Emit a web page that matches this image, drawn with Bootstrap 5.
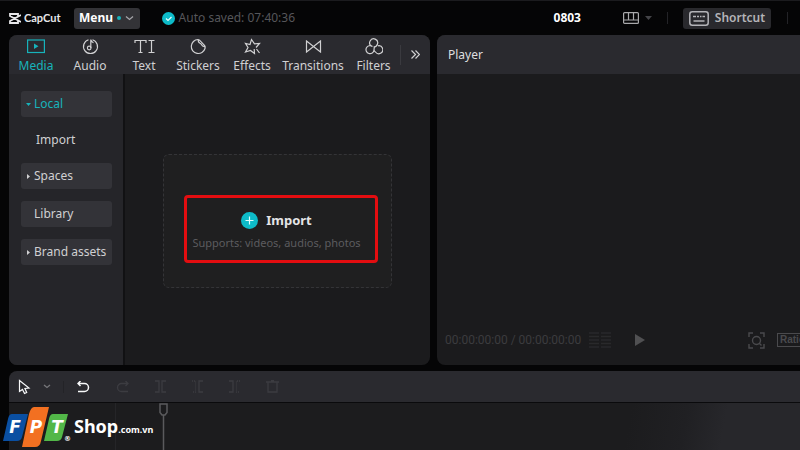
<!DOCTYPE html>
<html lang="en" data-bs-theme="dark">
<head>
<meta charset="utf-8">
<meta name="viewport" content="width=device-width, initial-scale=1">
<title>CapCut</title>
<link href="https://cdn.jsdelivr.net/npm/bootstrap@5.3.0/dist/css/bootstrap.min.css" rel="stylesheet">
<style>
  body { background: #050506; color: #d0d0d2; font: 12px/16px "Noto Sans", "Open Sans", sans-serif; }
  svg { display: block; flex: none; }
  svg:not([fill]) { fill: none; }
  svg:not([stroke]) { stroke: currentColor; }
  button { font: inherit; color: inherit; border: 0; background: none; padding: 0; }
  .teal { color: #17b3bb; }
  .topbar { height: 35px; border-top: 1px solid #1b1b1e; padding-left: 9px; }
  .brand-name { font: 700 11px/16px Lato, sans-serif; color: #e8e8ea; margin-left: 3px; }
  .menu-btn { height: 21px; width: 66px; background: #333337; border-radius: 3px; color: #fff; font-weight: 700; margin-left: 13px; }
  .dot { width: 4px; height: 4px; border-radius: 50%; background: #17b3bb; }
  .saved { color: #56565a; margin-left: 22px; }
  .project { margin-right: 42px; }
  .layout-btn { gap: 6px; }
  .divider { margin: 0 15px; }
  .shortcut { height: 21px; width: 88px; background: #29292d; border-radius: 3px; color: #b4b4b8; font-weight: 600; gap: 6px; }
  .vline { width: 1px; height: 12px; background: #232327; }
  .head .vline { height: 20px; background: #3a3a3f; }
  .workspace { padding-left: 9px; gap: 7px; }
  .media-panel { width: 421px; flex: none; background: #1b1b1d; border-radius: 8px; }
  .head { height: 39px; background: #2a2a2f; }
  .tab { width: 54px; padding-top: 3px; gap: 3px; }
  .tab-wide { width: 68px; }
  .tab-end { width: 53px; }
  .side { width: 116px; background: #252529; border-right: 2px solid #111113; padding: 17px 11px 16px 12px; gap: 12px; }
  .side-item { height: 26px; background: #333338; border-radius: 3px; padding-left: 5px; gap: 3px; width: 91px; }
  .side-plain { background: none; padding-left: 7px; margin: -2px 0; }
  .tri { width: 5px; }
  .media-drop { padding-top: 2px; }
  .drop { width: 229px; height: 134px; border: 1px dashed #343437; border-radius: 6px; background: #1f1f20; padding-top: 17px; }
  .marked { width: 194px; height: 68px; flex: none; border: 3px solid #e30d10; border-radius: 4px; padding: 4px 8px 0 0; gap: 6px; margin-right: -6px; }
  .import-btn { font-weight: 700; font-size: 13px; color: #e4e4e6; gap: 8px; }
  .hint { font-size: 11px; color: #5c5c5f; }
  .player { background: #1b1b1d; border-radius: 8px 0 0 8px; }
  .player .head { padding-left: 11px; color: #dededf; }
  .transport { height: 50px; padding-left: 8px; color: #3c3c3f; }
  .timecode { font: 12px/16px Roboto, sans-serif; }
  .fit-btn { margin-right: 12px; }
  .ratio-btn { border: 1px solid #4a4a4d; font: 700 10px/12px "Liberation Sans", sans-serif; color: #4a4a4d; padding: 0 2px; margin-right: -8px; }
  .timeline { margin: 6px 0 0 9px; }
  .tools { height: 31px; background: #2a2a2f; border-radius: 8px 0 0 0; color: #3c3c41; padding-left: 9px; }
  .tool-divider { margin: 0 13px 0 12px; }
  .edit-tools { gap: 26px; }
  .tracks { height: 48px; border-top: 1px solid #0a0a0c; background: linear-gradient(100deg, #1c1c1e 78%, #202023 85%, #27272b 90%); }
  .track-head { width: 107px; border-right: 1px solid #252528; }
  .cursor { left: 150px; top: 0; color: #5a5a5d; }
  .logo { left: 3px; bottom: 2px; color: #fff; }
  .shop { font: 700 18px/20px "Noto Sans", sans-serif; margin-left: 3px; }
  .shop small { font-size: 9px; }
</style>
<script src="https://cdn.jsdelivr.net/npm/bootstrap@5.3.0/dist/js/bootstrap.bundle.min.js"></script>
</head>
<body class="vh-100 d-flex flex-column overflow-hidden text-nowrap position-relative">
<header class="topbar d-flex align-items-center flex-shrink-0">
  <svg width="12" height="11" viewBox="0 0 12 11" stroke="#e8e8ea" stroke-width="1.8"><path d="M9 3V1H1v2l11 6M9 8v2H1V8l11-6"/></svg>
  <span class="brand-name">CapCut</span>
  <button class="menu-btn d-flex align-items-center justify-content-center" type="button">Menu
    <span class="dot ms-1"></span>
    <svg class="ms-1" width="9" height="6" viewBox="0 0 9 6" stroke="#a5a5a9" stroke-width="1.3"><path d="M1 1.500 4.500 4.500 8 1.500"/></svg>
  </button>
  <div class="saved d-flex align-items-center gap-1">
    <svg width="13" height="13" viewBox="0 0 13 13"><circle cx="6.500" cy="6.500" r="6.500" fill="#0dbbc8" stroke="none"/><path d="m4 6.500 2 2 3.500-3.500" stroke="#e9ffff" stroke-width="1.200"/></svg>
    <span>Auto saved: 07:40:36</span>
  </div>
  <div class="ms-auto d-flex align-items-center">
    <strong class="project text-white">0803</strong>
    <button type="button" class="layout-btn d-flex align-items-center" aria-label="Layout">
      <svg width="16" height="12" viewBox="0 0 16 12" stroke="#a9a9ab" stroke-width="1.200"><rect x=".6" y=".6" width="14.800" height="10.800" rx="1"/><path d="M1 8h14M5.500 1v7M10.500 1v7"/></svg>
      <svg width="7" height="4" viewBox="0 0 7 4"><path d="M0 0h7L3.500 4z" fill="#444448" stroke="none"/></svg>
    </button>
    <span class="vline divider"></span>
    <button type="button" class="shortcut d-flex align-items-center justify-content-center">
      <svg width="20" height="15" viewBox="0 0 20 15" stroke-width="1.500"><rect x=".8" y=".8" width="18.400" height="13.400" rx="2.500"/><path d="M4 5.500h3M8 5.500h2M11 5.500h1.500M13.500 5.500H16M4.500 10h11"/></svg>Shortcut
    </button>
    <span class="vline ms-3 me-2"></span>
    <span class="ps-1"></span>
  </div>
</header>

<main class="workspace d-flex flex-grow-1">
  <section class="media-panel d-flex flex-column overflow-hidden">
    <nav class="head d-flex flex-shrink-0">
      <button type="button" class="tab teal d-flex flex-column align-items-center">
        <svg width="18" height="17" viewBox="0 0 18 17" stroke-width="1.200"><rect x=".6" y="2" width="16.800" height="12.500"/><path d="m7 5.500 4.500 2.800L7 11z" fill="currentColor" stroke="none"/></svg>Media</button>
      <button type="button" class="tab d-flex flex-column align-items-center">
        <svg width="17" height="17" viewBox="0 0 17 17" stroke-width="1.200"><path d="M6.500 1.800a7 7 0 1 0 4 0M8.800 10V1.500c.3 2 1.200 2.500 2.700 3.300"/><circle cx="7.200" cy="10" r="1.800"/></svg>Audio</button>
      <button type="button" class="tab d-flex flex-column align-items-center">
        <svg width="21" height="17" viewBox="0 0 21 17" stroke-width="1.200"><path d="M1 5V2.500h11V5M6.500 2.500v12M4.500 14.500h4M14.500 2.500h6M17.500 2.500v12M14.500 14.500h6"/></svg>Text</button>
      <button type="button" class="tab d-flex flex-column align-items-center">
        <svg width="17" height="17" viewBox="0 0 17 17" stroke-width="1.200"><path d="M8 1.500a7 7 0 1 0 7 9c.4-1.300.2-2.200-.3-2.800L9.500 2.200C9 1.700 8.500 1.500 8 1.500zM8.500 1.700c-.6 2 .2 3 1.500 3.600 1.200.5 1.300.8 1.600 1.500.5 1.300 1.600 2 3.600 1.700"/></svg>Stickers</button>
      <button type="button" class="tab d-flex flex-column align-items-center">
        <svg width="17" height="17" viewBox="0 0 17 17" stroke-width="1.200"><path d="M12 9.500 15.500 5.500l-5 .3L7.500 1.500 6 6.500 1.500 5.500 4 9.500l-2.500 4.500 5-1.500 4 3-.3-4.500M12.500 11l3 4"/></svg>Effects</button>
      <button type="button" class="tab tab-wide d-flex flex-column align-items-center">
        <svg width="17" height="17" viewBox="0 0 17 17" stroke-width="1.200"><path d="M1.500 3v11L8.500 8.500 15.500 14V3L8.500 8.500z"/></svg>Transitions</button>
      <button type="button" class="tab tab-end d-flex flex-column align-items-center">
        <svg width="18" height="17" viewBox="0 0 18 17" stroke-width="1.200"><path d="M6.500 8.200A4 4 0 1 1 12.500 6c-.5 2-2 3-4 3M7.500 8.500A4 4 0 1 0 9 12M10.500 14A4 4 0 1 0 13 7.800M10.500 14C9 13 8.800 11 9.500 9.500"/></svg>Filters</button>
      <span class="vline align-self-center"></span>
      <button type="button" class="flex-grow-1 d-flex align-items-center justify-content-center" aria-label="More"><svg width="9" height="9" viewBox="0 0 9 9" stroke-width="1.200"><path d="m.5.5 4 4-4 4M4.500.5l4 4-4 4"/></svg></button>
    </nav>
    <div class="d-flex flex-grow-1">
      <aside class="side d-flex flex-column">
        <button type="button" class="side-item teal d-flex align-items-center"><svg class="tri" width="5" height="5" viewBox="0 0 5 5"><path d="M0 1h5L2.500 4z" fill="currentColor" stroke="none"/></svg>Local</button>
        <button type="button" class="side-item side-plain d-flex align-items-center"><span class="tri"></span>Import</button>
        <button type="button" class="side-item d-flex align-items-center"><svg class="tri" width="5" height="5" viewBox="0 0 5 5"><path d="M1 0v5l3-2.500z" fill="currentColor" stroke="none"/></svg>Spaces</button>
        <button type="button" class="side-item d-flex align-items-center"><span class="tri"></span>Library</button>
        <button type="button" class="side-item d-flex align-items-center"><svg class="tri" width="5" height="5" viewBox="0 0 5 5"><path d="M1 0v5l3-2.500z" fill="currentColor" stroke="none"/></svg>Brand assets</button>
      </aside>
      <div class="media-drop flex-grow-1 d-flex align-items-center justify-content-center">
        <div class="drop d-flex align-items-center justify-content-center">
          <div class="marked d-flex flex-column align-items-center justify-content-center">
            <button type="button" class="import-btn d-flex align-items-center"><svg width="17" height="17" viewBox="0 0 17 17"><circle cx="8.500" cy="8.500" r="8.500" fill="#0dbbc8" stroke="none"/><path d="M4.500 8.500h8M8.500 4.500v8" stroke="#dff" stroke-width="1.200"/></svg>Import</button>
            <span class="hint">Supports: videos, audios, photos</span>
          </div>
        </div>
      </div>
    </div>
  </section>

  <section class="player flex-grow-1 d-flex flex-column overflow-hidden">
    <div class="head d-flex align-items-center flex-shrink-0">Player</div>
    <div class="transport d-flex align-items-center mt-auto">
      <span class="timecode">00:00:00:00 / 00:00:00:00</span>
      <svg class="ms-2" width="22" height="16" viewBox="0 0 22 16" stroke="#29292b" stroke-width="1.500"><path d="M0 1h10M0 4.500h10M0 8h10M0 11.500h10M0 15h10M12 1h10M12 4.500h10M12 8h10M12 11.500h10M12 15h10"/></svg>
      <button type="button" class="ms-4" aria-label="Play"><svg width="10" height="12" viewBox="0 0 10 12"><path d="M0 0v12l10-6z" fill="#505052" stroke="none"/></svg></button>
      <button type="button" class="fit-btn ms-auto" aria-label="Zoom to fit"><svg width="17" height="17" viewBox="0 0 17 17" stroke="#4a4a4d" stroke-width="1.400"><path d="M1 5V1h4M12 1h4v4M16 12v4h-4M5 16H1v-4M11 11l2.500 2.500"/><circle cx="8.500" cy="8.500" r="4"/></svg></button>
      <button type="button" class="ratio-btn">Ratio</button>
    </div>
  </section>
</main>

<section class="timeline flex-shrink-0">
  <div class="tools d-flex align-items-center">
    <button type="button" class="text-light" aria-label="Select"><svg width="13" height="16" viewBox="0 0 13 16" stroke-width="1.200"><path d="M1.500 1.500v11l3-2 2 4 2.200-1-1.800-4 4.100-.5z"/></svg></button>
    <svg class="ms-2 ps-1" width="12" height="5" viewBox="0 0 8 5" stroke="#77777b" stroke-width="1.300"><path d="m1 1 3 2.500L7 1"/></svg>
    <span class="vline tool-divider"></span>
    <div class="edit-tools d-flex align-items-center">
      <button type="button" class="text-light" aria-label="Undo"><svg width="13" height="12" viewBox="0 0 13 12" stroke-width="1.500"><path d="M3.500 0 1 2.500 3.500 5M1 2.500h6.500a4 4 0 0 1 0 8H1"/></svg></button>
      <button type="button" aria-label="Redo"><svg width="13" height="12" viewBox="0 0 13 12" stroke-width="1.300"><path d="M9.500 0 12 2.500 9.500 5M12 2.500H5.500a4 4 0 0 0 0 8H12"/></svg></button>
      <button type="button" aria-label="Split"><svg width="11" height="13" viewBox="0 0 11 13" stroke-width="1.300"><path d="M0 1h4v11H0M11 1H7v11h4"/></svg></button>
      <button type="button" aria-label="Delete left"><svg width="11" height="13" viewBox="0 0 11 13" stroke-width="1.300"><path d="M0 1h3.500v11H0" stroke-dasharray="1 1"/><path d="M11 1H7v11h4"/></svg></button>
      <button type="button" aria-label="Delete right"><svg width="11" height="13" viewBox="0 0 11 13" stroke-width="1.300"><path d="M0 1h4v11H0"/><path d="M11 1H7.500v11H11" stroke-dasharray="1 1"/></svg></button>
      <button type="button" aria-label="Delete"><svg width="13" height="13" viewBox="0 0 13 13" stroke-width="1.300"><path d="M0 2h13M2 2v10h9V2M5 .7h3"/></svg></button>
    </div>
  </div>
  <div class="tracks d-flex position-relative">
    <div class="track-head"></div>
    <svg class="cursor position-absolute" width="9" height="48" viewBox="0 0 9 48" stroke-width="1.500"><path d="M1 1h7v8.500L6 12H3L1 9.500zM4.500 12v36"/></svg>
  </div>
</section>

<a href="#" class="logo position-absolute d-flex align-items-center text-decoration-none">
  <svg width="68" height="41" viewBox="0 0 68 41" font-family="DejaVu Sans, sans-serif" font-weight="700" font-style="italic" font-size="17" fill="#fff" stroke="none" text-anchor="middle">
    <path fill="#0a4fa2" d="M9 7h16l-6 23q-1 4-5 4H0l5-22q1-5 4-5z"/>
    <path fill="#52b748" d="M50 7h15l-6 23q-1 4-5 4H41l5-22q1-5 4-5z"/>
    <path fill="#f27021" d="M31 0h15l-8 34q-1 6-6 6H19l7-33q2-7 5-7z"/>
    <text x="12" y="26">F</text><text x="33" y="26">P</text><text x="54" y="26">T</text>
    <text x="64.500" y="34" font-size="7" font-style="normal">®</text>
  </svg>
  <span class="shop">Shop<small>.com.vn</small></span>
</a>
</body>
</html>
